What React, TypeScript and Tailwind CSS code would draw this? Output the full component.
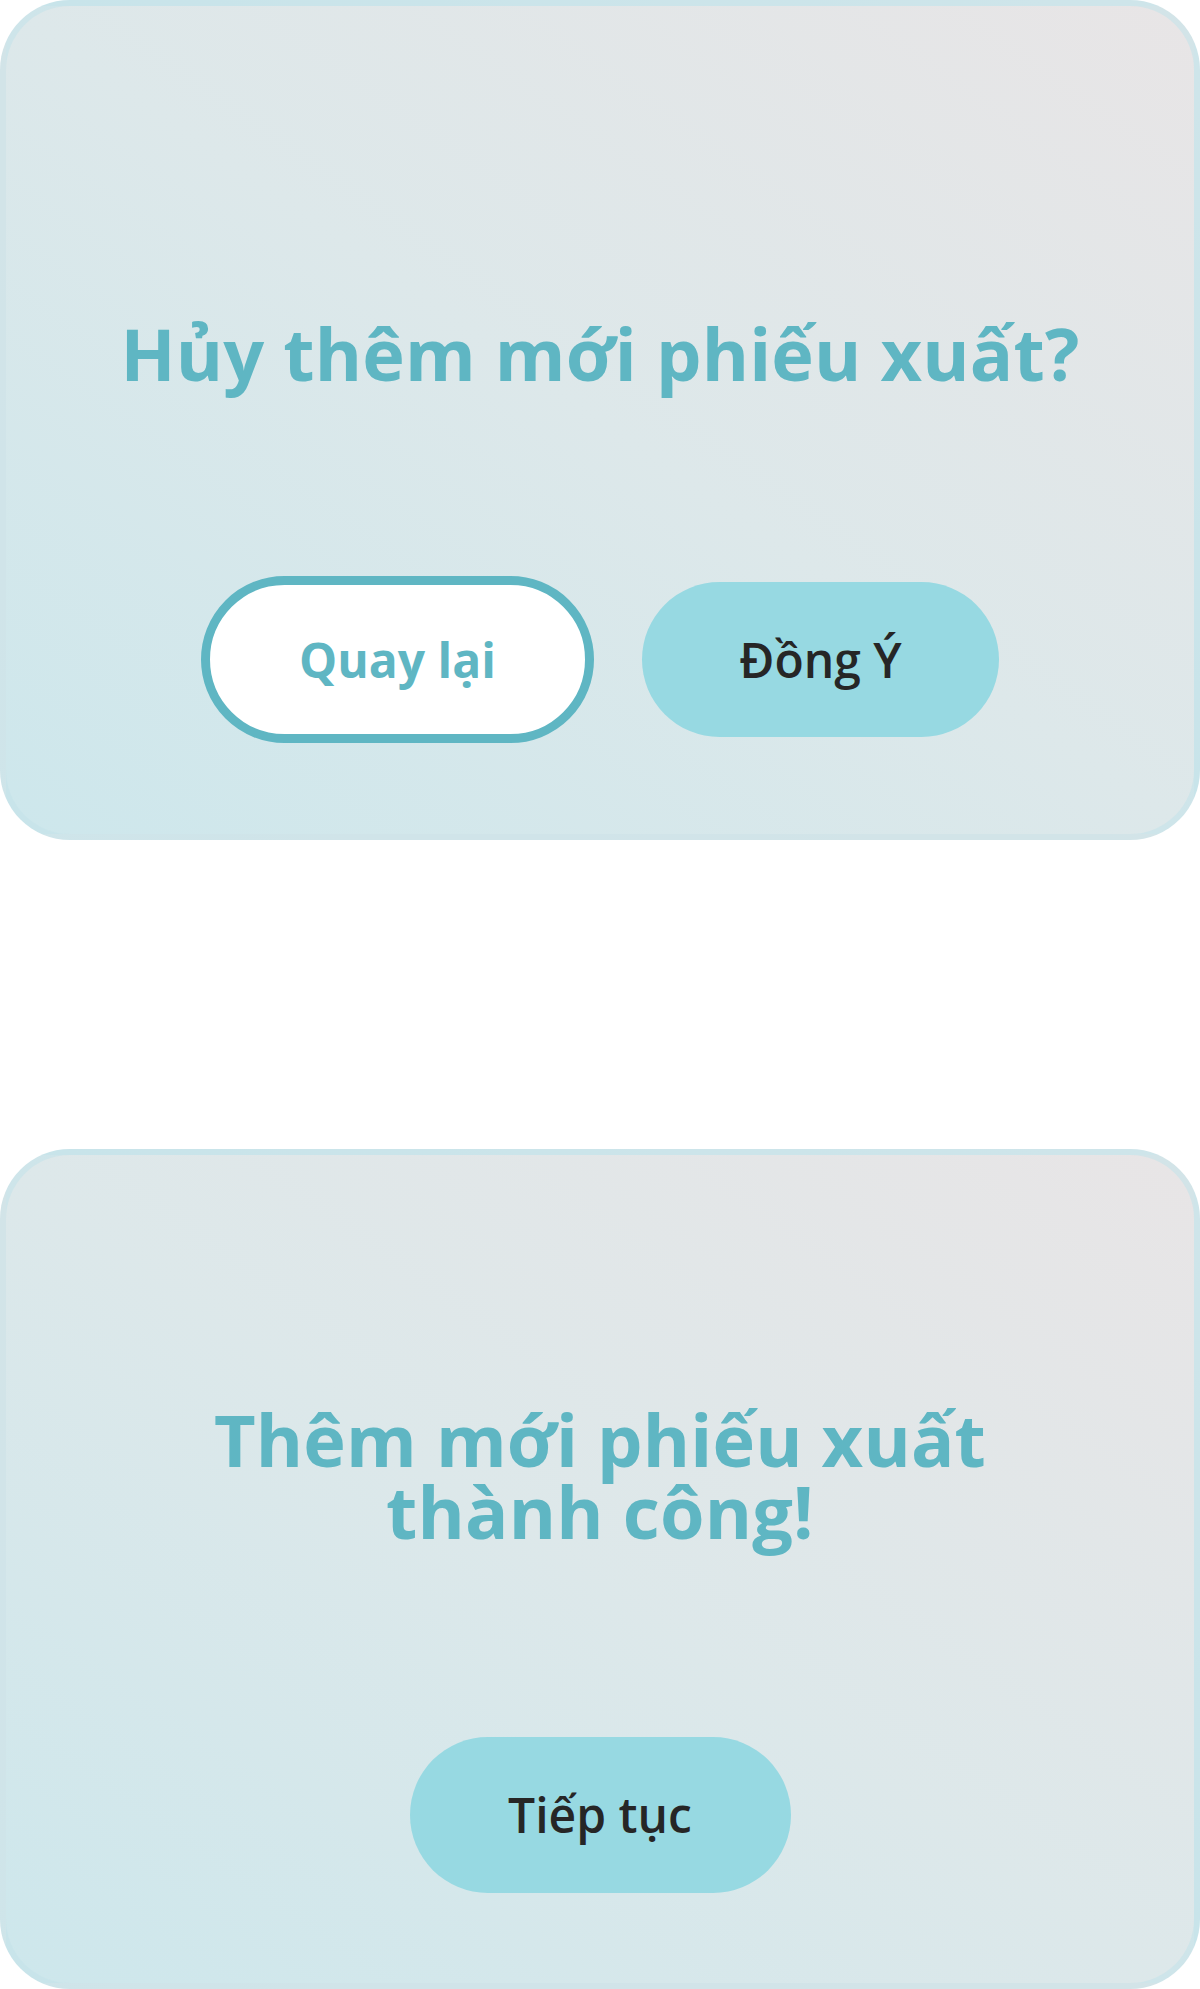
import React from 'react';

const font = { fontFamily: '"Open Sans", "Noto Sans", sans-serif' };

const Card: React.FC<{ top: string; children: React.ReactNode }> = ({ top, children }) => (
  <div
    className={`w-[1200px] h-[840px] rounded-[70px] border-[6px] border-[#c4e3ea]/60 bg-gradient-to-tr from-[#cde7ec] via-[#dde8ea] to-[#e8e5e6] flex flex-col items-center ${top}`}
  >
    {children}
  </div>
);

export default function App() {
  return (
    <div className="w-[1200px] bg-white flex flex-col gap-[309px]" style={font}>
      <Card top="pt-[311px]">
        <h1 className="text-[72px] leading-[72px] font-bold tracking-[0.2px] text-[#5fb6c3] text-center">
          Hủy thêm mới phiếu xuất?
        </h1>
        <div className="mt-[187px] flex items-center gap-[48px]">
          <button className="w-[393px] h-[167px] rounded-full border-[9px] border-[#5fb6c3] bg-white text-[48px] font-bold text-[#5fb6c3]">
            Quay lại
          </button>
          <button className="w-[357px] h-[155px] rounded-full bg-[#97d9e2] text-[48px] font-semibold text-[#262626]">
            Đồng Ý
          </button>
        </div>
      </Card>
      <Card top="pt-[248px]">
        <h1 className="text-[72px] leading-[72px] font-bold tracking-[0.2px] text-[#5fb6c3] text-center">
          Thêm mới phiếu xuất
          <br />
          thành công!
        </h1>
        <div className="mt-[190px]">
          <button className="w-[381px] h-[156px] rounded-full bg-[#97d9e2] text-[48px] font-semibold text-[#262626]">
            Tiếp tục
          </button>
        </div>
      </Card>
    </div>
  );
}
